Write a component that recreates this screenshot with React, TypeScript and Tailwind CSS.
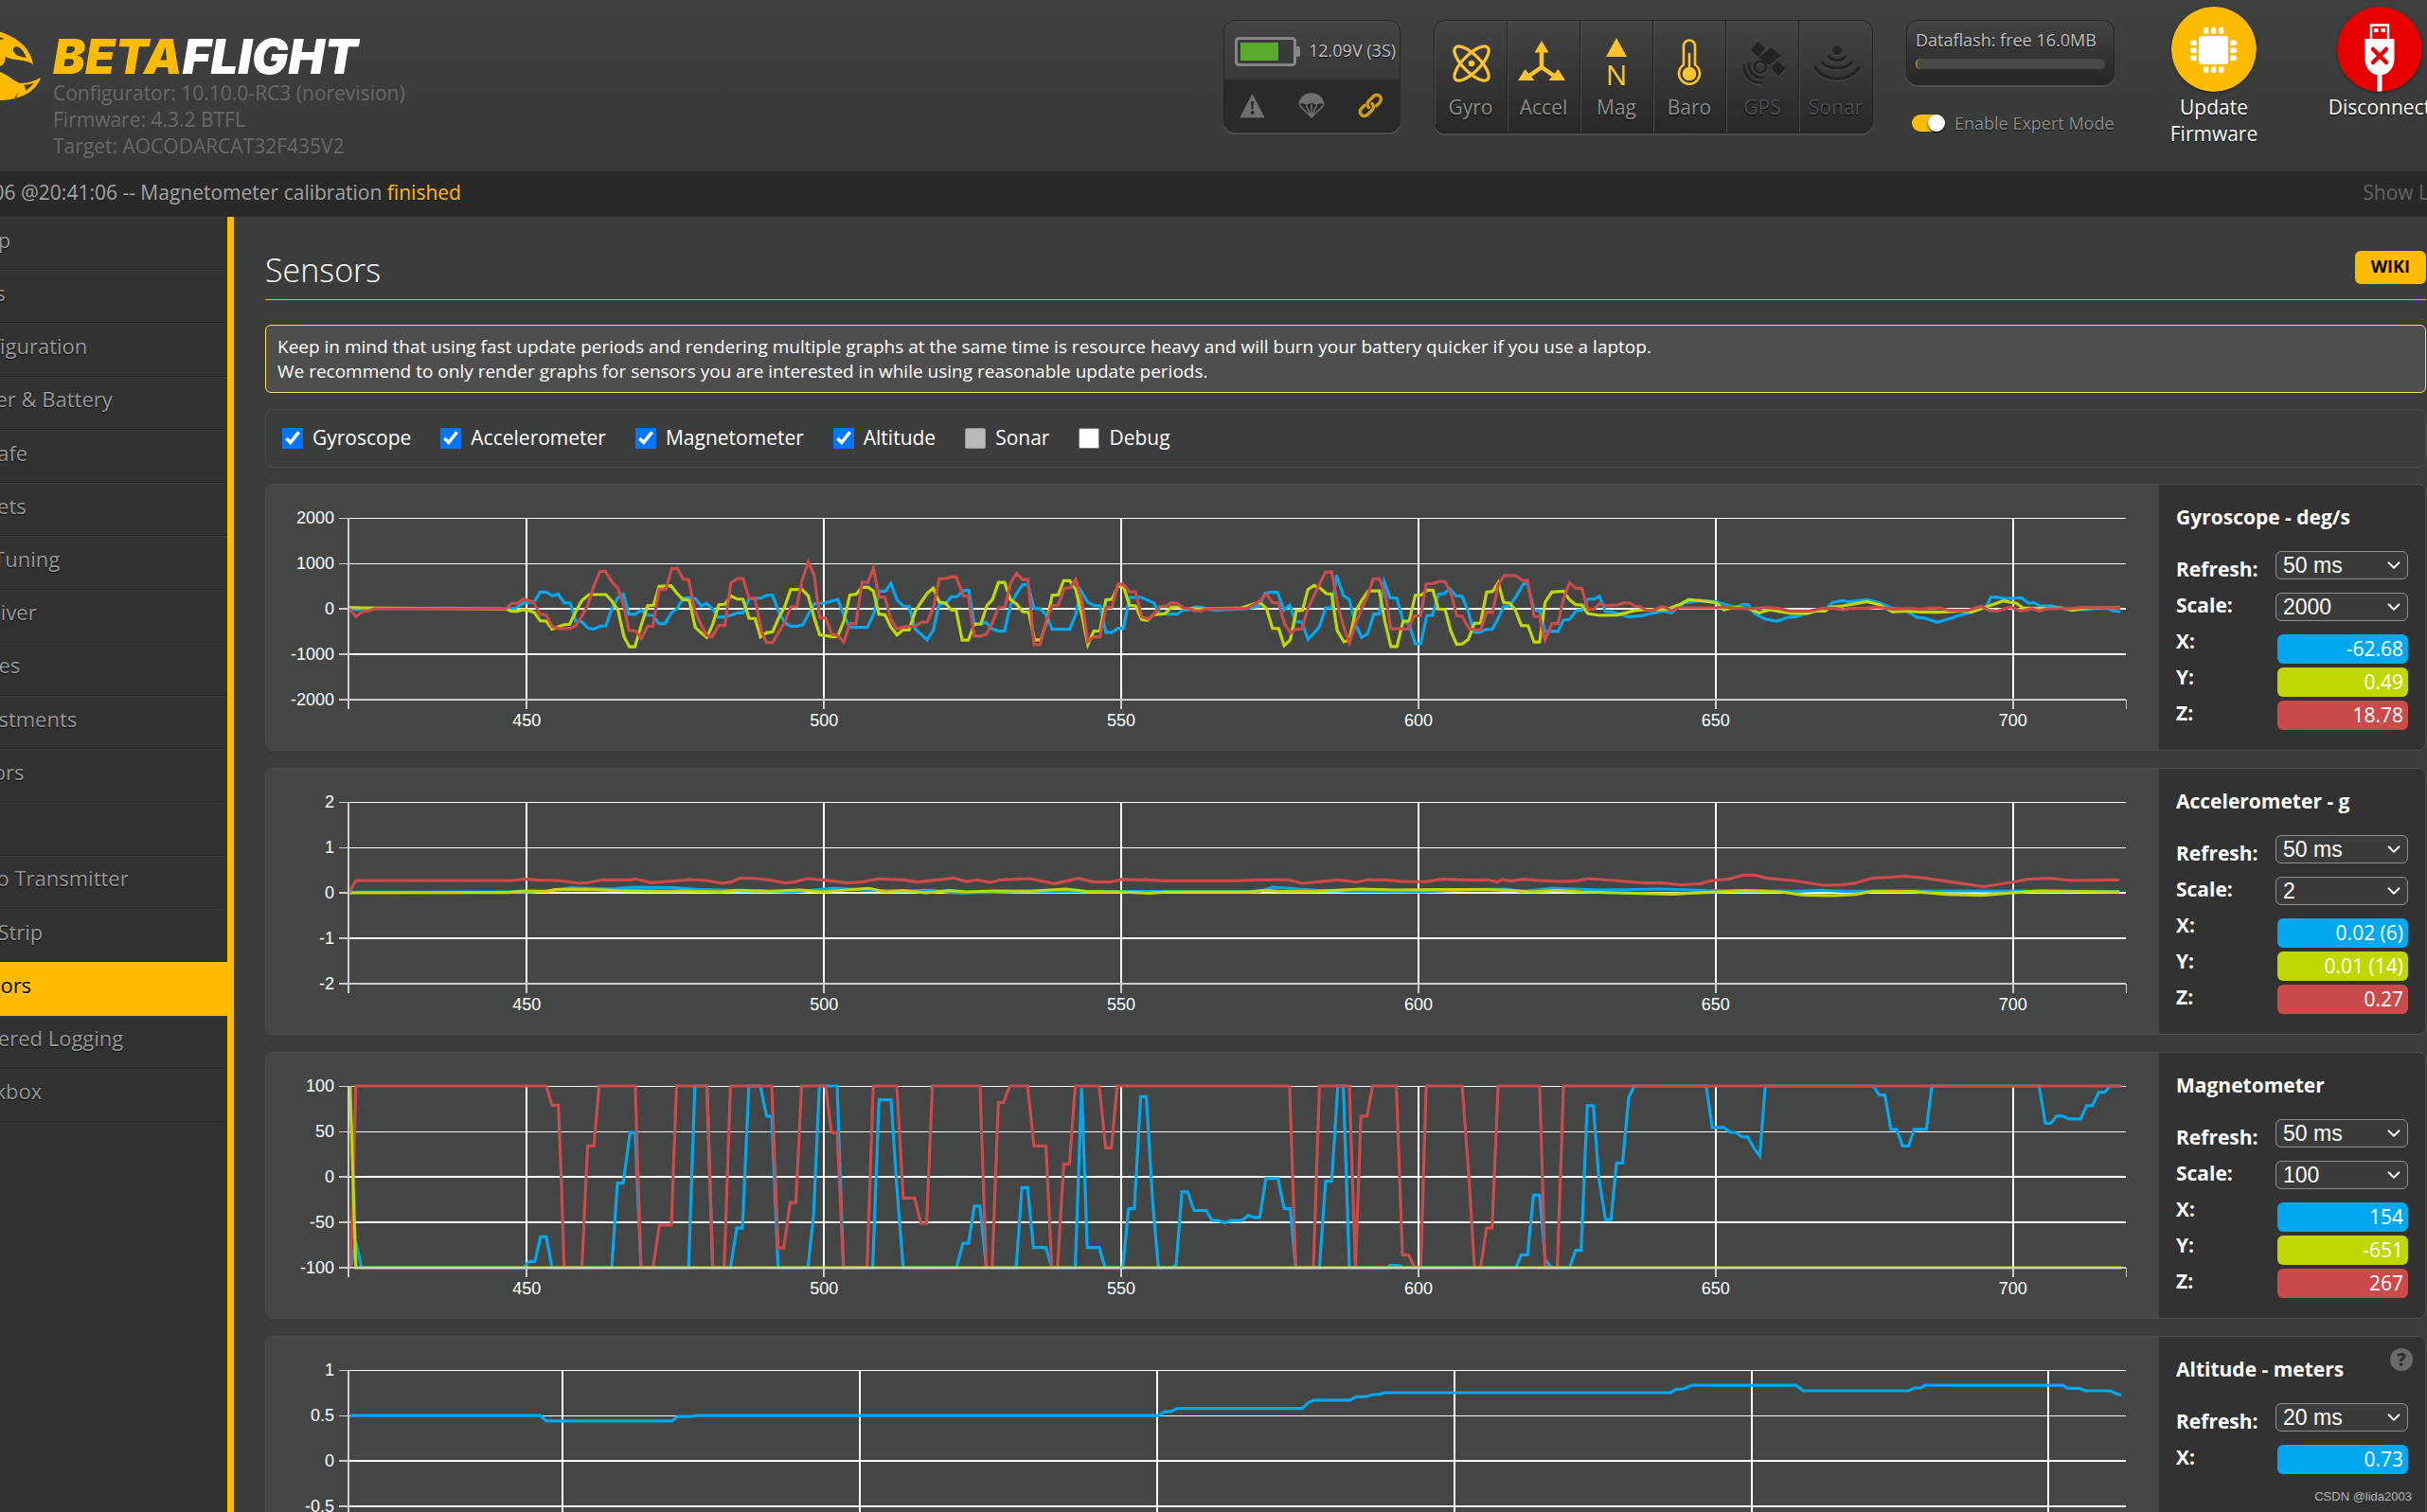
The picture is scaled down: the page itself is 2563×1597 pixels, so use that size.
import { useId, useLayoutEffect, useRef, useState } from "react";
import type { ReactNode } from "react";
import { ChevronDown } from "lucide-react";

const BLUE = "#00a8f0";
const GREEN = "#c0d800";
const RED = "#cb4b4b";

/* ---------- recorded data ---------- */

type Cal = { t: number; x: number; perUnit: number; zero: number; perValue: number };
type Point = [number, number];

const GYRO_A: Cal = { t: 450, x: 449, perUnit: 9.844, zero: 941, perValue: 0.1444 };
const GYRO_B: Cal = { t: 600, x: 369.3, perUnit: 9.747, zero: 431, perValue: 0.1444 };
const ACC: Cal = { t: 450, x: 162, perUnit: 5.181, zero: 129, perValue: 144 };
const MAG_A: Cal = { t: 450, x: 374, perUnit: 10.362, zero: 368, perValue: 2.89 };
const MAG_B: Cal = { t: 600, x: 369.3, perUnit: 9.747, zero: 368, perValue: 2.89 };
const ALT: Cal = { t: 450, x: 248.5, perUnit: 4.971, zero: 425.5, perValue: 290 };

function decode(cal: Cal, raw: string): Point[] {
  const n = raw.trim().split(/\s+/).map(Number);
  const out: Point[] = [];
  for (let i = 0; i + 1 < n.length; i += 2) {
    out.push([cal.t + (n[i] - cal.x) / cal.perUnit, (cal.zero - n[i + 1]) / cal.perValue]);
  }
  return out;
}

const gyroX = [
  ...decode(GYRO_A, `155 938 166 944 177 941 320 939 414 941 430 940 443 922 461 920 471 888 481 888 491 900 501 895 511 922 521 923 530 980 540 982 550 1002 560 1006 570 996 580 995 590 940 600 905 609 895 618 958 628 959 638 945 648 961 658 962 668 988 678 988 688 955 698 940 708 907 718 906 728 908 738 932 747 924 757 942 766 968 776 966 787 962 797 954 807 954 817 909 837 907 847 898 856 898 866 950 876 985 886 996 896 996 906 992 915 960 925 925 943 923 954 916 964 911 974 960 984 1000 1013 1000 1023 960 1033 885 1043 885 1052 860 1062 912 1072 932 1082 933 1092 1005 1102 1022 1112 1040 1122 1010 1132 925 1142 926 1152 903 1162 902 1172 883 1181 883 1190 990 1210 985 1220 1005 1230 1012 1240 1012 1250 930 1260 893 1270 865 1279 865 1289 940 1299 941 1309 960 1319 1006 1348 1006 1358 960 1366 882 1378 920 1388 930 1398 932 1408 1016 1418 1016 1428 1003 1437 1003 1447 905 1467 905 1487 922 1497 957 1516 958 1526 958 1536 945 1546 944 1556 935 1566 936`),
  ...decode(GYRO_B, `20 430 35 436 90 430 108 422 118 381 128 379 138 379 149 435 158 420 168 472 178 473 188 528 198 508 207 488 217 428 227 428 235 325 246 388 256 402 266 480 276 522 286 510 296 448 305 448 313 345 323 396 334 397 344 470 354 480 364 542 373 542 383 452 392 452 402 385 411 383 421 368 431 390 441 391 451 440 460 505 470 506 480 497 490 496 500 462 509 424 519 422 530 390 541 352 548 351 559 436 568 437 577 503 598 503 607 467 617 465 628 437 637 436 647 401 657 400 666 392 676 440 686 440 714 457 735 453 745 448 758 444 770 438 784 444 805 412 830 405 855 408 875 418 890 426 900 418 910 418 920 445 938 464 958 470 975 458 990 456 1010 440 1035 436 1048 411 1065 405 1075 409 1095 404 1105 402 1125 412 1145 428 1168 435 1186 458 1200 461 1220 474 1245 460 1255 452 1275 443 1300 425 1308 394 1318 394 1330 399 1358 396 1370 414 1378 411 1388 422 1408 422 1430 432 1465 434 1478 430 1500 430 1508 438 1520 440`),
];
const gyroY = [
  ...decode(GYRO_A, `155 937 175 938 414 942 424 949 434 949 443 944 455 948 462 954 471 979 481 980 491 1006 501 998 510 992 520 990 530 950 540 915 552 896 580 896 590 917 600 945 610 1030 619 1062 628 1062 639 990 649 931 659 930 668 870 688 868 698 893 708 912 718 914 728 1000 738 1018 747 1032 757 990 767 928 777 927 787 900 797 910 807 911 817 971 827 972 836 1030 846 1017 856 1014 866 970 876 935 886 880 905 880 915 900 925 970 934 1024 946 1027 958 1030 964 1028 974 980 984 897 994 895 1004 873 1014 872 1023 885 1032 958 1042 960 1052 1000 1062 1024 1072 1008 1082 1008 1092 950 1102 920 1112 892 1122 876 1132 920 1142 922 1152 945 1160 946 1170 1041 1180 1041 1190 990 1201 989 1211 930 1220 912 1230 857 1240 857 1250 912 1260 926 1270 950 1280 952 1290 1040 1300 1040 1310 980 1319 898 1329 897 1338 852 1348 852 1358 880 1368 960 1378 1055 1388 1012 1398 1011 1408 912 1418 911 1428 870 1437 870 1447 930 1457 932 1467 975 1476 978 1487 960 1506 957 1516 936 1528 935 1540 940 1566 942`),
  ...decode(GYRO_B, `20 431 80 428 108 409 120 430 130 493 140 494 149 548 159 530 169 437 179 436 188 370 198 357 208 365 218 383 227 384 236 500 247 536 256 530 266 440 276 405 287 374 305 374 314 470 324 551 334 551 344 470 354 470 364 388 374 387 384 372 393 372 402 432 413 433 422 500 432 544 441 543 451 528 461 477 471 476 481 378 491 376 500 348 509 411 519 413 528 435 538 484 549 485 559 537 568 537 577 410 588 378 607 375 617 402 627 418 637 419 647 446 666 452 695 451 725 436 745 434 775 434 800 415 812 402 835 406 858 412 870 434 890 426 910 430 928 444 945 434 980 446 1008 446 1020 438 1036 438 1045 426 1065 422 1085 415 1105 408 1125 418 1147 441 1165 438 1195 441 1220 442 1245 440 1258 436 1275 442 1300 425 1328 406 1350 414 1360 428 1400 430 1425 428 1440 436 1470 428 1520 428`),
];
const gyroZ = [
  ...decode(GYRO_A, `155 941 166 966 177 950 187 948 197 941 414 941 424 924 434 923 443 910 452 915 460 920 471 958 481 960 491 997 501 1004 520 1004 530 995 540 965 550 930 560 870 570 822 579 822 590 855 600 875 610 935 618 1010 629 1012 639 1035 649 996 658 996 668 880 679 880 689 814 698 812 708 847 717 848 727 945 737 990 747 1026 756 1030 767 994 777 994 787 858 798 845 807 845 817 907 827 908 837 1010 846 1048 856 1048 866 1015 876 985 886 935 896 935 905 850 915 792 925 835 934 970 944 971 954 1022 964 1026 974 1047 984 988 994 988 1004 857 1014 857 1023 812 1032 903 1042 904 1052 975 1062 1005 1073 998 1092 996 1102 984 1112 983 1122 940 1132 846 1142 845 1152 840 1160 840 1172 900 1180 901 1190 1028 1200 1028 1210 1022 1220 985 1230 937 1241 936 1250 860 1260 828 1270 848 1279 848 1289 1055 1299 1055 1309 980 1319 931 1329 930 1339 876 1349 874 1358 847 1368 915 1378 1045 1388 1030 1398 1030 1408 937 1418 936 1428 862 1437 864 1447 887 1457 887 1467 965 1477 973 1487 960 1497 934 1509 932 1516 922 1526 923 1536 938 1546 940 1556 948 1566 948`),
  ...decode(GYRO_B, `20 432 88 430 110 405 120 383 130 411 140 412 150 480 160 508 168 496 178 495 188 430 205 360 217 314 227 314 237 420 247 490 256 540 266 480 276 430 286 390 295 336 305 336 315 385 324 494 352 495 363 453 373 453 382 352 393 351 403 345 413 345 423 385 432 453 441 455 452 493 462 498 471 498 481 442 491 442 500 355 510 325 529 325 539 340 548 341 559 455 568 456 577 530 588 478 598 478 607 400 617 348 627 365 637 366 647 432 656 433 667 414 675 421 696 419 706 412 716 413 724 423 732 424 743 436 753 436 768 424 774 426 784 438 795 428 860 428 870 425 890 430 920 430 940 427 960 430 978 438 1010 438 1030 430 1055 430 1065 434 1080 430 1102 430 1120 426 1150 432 1180 430 1190 433 1210 428 1225 429 1240 436 1270 436 1292 423 1305 436 1318 438 1340 426 1358 438 1375 431 1387 438 1400 431 1440 430 1460 426 1520 429`),
];

const accX = decode(ACC, `7 127 145 126 165 126 185 121 200 113 235 117 255 111 290 113 310 118 330 120 350 123 395 126 430 114 460 121 490 123 515 121 540 130 600 124 650 125 680 125 800 125 812 111 850 121 880 124 940 126 985 119 1015 117 1030 125 1055 115 1075 117 1100 120 1150 117 1190 122 1270 124 1290 121 1310 124 1380 123 1420 123 1550 125`);
const accY = decode(ACC, `7 129 145 128 160 123 178 125 186 119 215 118 240 122 280 124 300 123 330 126 345 121 375 124 400 120 420 126 440 120 460 115 475 126 490 122 510 129 530 122 545 126 570 123 600 124 632 117 650 125 680 126 705 130 720 126 790 126 806 121 820 125 850 124 890 117 920 120 960 119 1000 119 1020 122 1040 126 1060 121 1080 126 1110 129 1160 133 1190 128 1225 122 1255 126 1275 136 1300 138 1320 134 1335 124 1370 125 1400 134 1430 137 1460 128 1480 123 1550 126`);
const accZ = decode(ACC, `7 129 13 90 150 90 160 85 172 89 190 90 208 99 215 97 228 88 250 88 257 85 270 97 285 93 305 87 318 90 332 99 340 95 348 82 362 84 375 89 387 98 395 95 406 84 420 88 442 98 455 94 468 85 490 88 503 95 520 88 534 82 545 93 555 88 566 96 575 88 600 84 622 100 643 83 655 94 670 95 680 87 700 88 720 91 780 91 800 88 825 87 838 99 850 95 868 88 885 95 895 88 910 88 925 93 945 94 960 86 990 89 1000 88 1008 95 1012 87 1020 92 1030 86 1045 90 1060 93 1075 92 1087 84 1110 90 1135 98 1150 97 1168 104 1185 100 1195 90 1210 85 1222 73 1232 73 1242 82 1265 90 1292 105 1308 104 1320 98 1335 82 1350 80 1362 76 1380 82 1410 98 1432 110 1445 102 1460 93 1470 86 1490 83 1508 90 1550 88`);

const magX = [
  ...decode(MAG_A, `67 657 76 575 86 657 368 657 378 637 388 637 398 559 408 559 418 657 522 657 532 388 542 388 554 227 563 227 573 657 656 657 667 79 688 79 698 657 729 657 740 531 750 531 761 79 781 79 792 175 801 175 812 657 864 657 874 490 884 79 915 79 926 657 977 657 988 123 1009 123 1019 400 1030 657 1123 657 1134 579 1144 579 1154 461 1164 461 1175 657 1227 657 1237 402 1247 402 1257 593 1279 593 1289 657 1330 657 1341 85 1351 593 1372 593 1382 657 1413 657 1423 469 1433 469 1444 113 1454 113 1465 450 1475 657 1498 657 1506 648 1516 416 1526 416 1537 475 1558 475`),
  ...decode(MAG_B, `31 507 42 507 52 515 61 507 80 507 90 490 100 497 109 497 119 373 139 373 149 469 159 469 168 657 207 657 217 382 227 382 237 79 246 79 256 657 320 657 322 650 336 650 345 657 529 657 538 616 548 616 558 426 568 426 577 630 587 657 617 657 627 602 636 602 646 142 656 142 665 370 676 504 685 504 694 324 704 324 714 115 723 79 841 79 851 211 870 211 880 226 890 227 900 241 909 241 919 275 929 302 938 79 1115 79 1125 108 1134 108 1144 217 1153 217 1163 270 1173 270 1182 217 1202 217 1211 79 1387 79 1397 198 1406 198 1416 174 1426 175 1436 184 1455 184 1465 142 1474 142 1485 99 1494 99 1504 79 1522 79`),
];
const magY = [...decode(MAG_A, `66 79 76 657 1560 657`), ...decode(MAG_B, `1522 657`)];
const magZ = [
  ...decode(MAG_A, `67 657 76 79 408 79 418 140 429 140 434 368 439 657 470 657 480 270 491 270 500 79 563 79 573 657 594 657 605 521 626 521 635 79 688 79 698 657 718 657 729 79 801 79 812 594 822 594 833 450 843 450 853 79 895 79 905 227 915 227 926 657 967 657 978 79 1019 79 1030 435 1050 435 1061 516 1071 516 1081 79 1164 79 1175 657 1185 657 1196 131 1205 131 1216 79 1247 79 1258 270 1279 270 1289 657 1299 657 1310 327 1320 327 1330 79 1372 79 1383 276 1393 276 1403 79 1560 79`),
  ...decode(MAG_B, `31 79 158 79 168 657 197 657 207 79 256 79 266 657 275 175 285 175 294 79 333 79 343 616 353 616 363 657 373 657 382 79 441 79 452 368 461 657 471 657 481 530 490 530 500 79 568 79 577 657 597 657 607 79 1522 79`),
];

const altX = decode(ALT, `71 281 230 281 235 298 340 298 345 284 356 284 361 281 747 281 752 269 757 268 763 258 867 258 872 240 877 232 907 232 912 221 921 220 926 214 932 213 936 208 1175 208 1180 197 1186 196 1193 184 1280 184 1286 202 1374 202 1379 193 1384 193 1388 184 1503 184 1507 194 1517 194 1522 202 1543 202 1549 213 1552 215`);

/* ---------- chart ---------- */

type Series = { color: string; points: Point[] };
type ChartProps = { title: string; start: number; end: number; ticks: number[]; series: Series[] };

function Chart({ title, start, end, ticks, series }: ChartProps) {
  const box = useRef<HTMLDivElement>(null);
  const [width, setWidth] = useState(0);

  useLayoutEffect(() => {
    const node = box.current;
    if (!node) return;
    const measure = () => setWidth(node.clientWidth);
    measure();
    const observer = new ResizeObserver(measure);
    observer.observe(node);
    return () => observer.disconnect();
  }, []);

  const left = 87;
  const right = width - 35;
  const top = 35;
  const height = 192;
  const bottom = top + height;
  const max = ticks[0];
  const min = ticks[ticks.length - 1];
  const px = (t: number) => left + ((t - start) / (end - start)) * (right - left);
  const py = (v: number) => top + ((max - v) / (max - min)) * height;
  const xTicks: number[] = [];
  for (let t = Math.ceil(start / 50) * 50; t < end; t += 50) xTicks.push(t);

  return (
    <div ref={box} className="min-w-0 flex-1 rounded-l-lg bg-[#444645]">
      {width > 0 && (
        <svg width={width} height={280} role="img" aria-label={title} className="block">
          <g stroke="#fff">
            {ticks.map((v, i) => (
              <line key={v} x1={left} x2={right} y1={py(v)} y2={py(v)} strokeWidth={i < 2 ? 1 : 2} shapeRendering="crispEdges" />
            ))}
            {xTicks.map((t) => (
              <line key={t} x1={px(t)} x2={px(t)} y1={top} y2={bottom} strokeWidth={2} shapeRendering="crispEdges" />
            ))}
          </g>
          <g fill="none" strokeWidth={3.2} strokeLinejoin="miter">
            {series.map((s, i) => (
              <polyline key={i} stroke={s.color} points={s.points.map(([t, v]) => `${px(t).toFixed(1)},${py(v).toFixed(1)}`).join(" ")} />
            ))}
          </g>
          <g stroke="#ccc" strokeWidth={2} shapeRendering="crispEdges">
            <line x1={left} x2={left} y1={top} y2={bottom + 10} />
            <line x1={left} x2={right} y1={bottom} y2={bottom} />
            <line x1={right} x2={right} y1={bottom} y2={bottom + 10} strokeWidth={1} />
            {ticks.map((v, i) => (
              <line key={v} x1={left - 10} x2={left} y1={py(v)} y2={py(v)} strokeWidth={i < 2 ? 1 : 2} />
            ))}
            {xTicks.map((t) => (
              <line key={t} x1={px(t)} x2={px(t)} y1={bottom} y2={bottom + 10} />
            ))}
          </g>
          <g fill="#fff" fontFamily="'Liberation Sans', Arial, sans-serif" fontSize={18}>
            {ticks.map((v) => (
              <text key={v} x={left - 15} y={py(v) + 6} textAnchor="end">{v}</text>
            ))}
            {xTicks.map((t) => (
              <text key={t} x={px(t)} y={bottom + 28} textAnchor="middle">{t}</text>
            ))}
          </g>
        </svg>
      )}
    </div>
  );
}

/* ---------- sensor panel ---------- */

type PanelProps = ChartProps & {
  refresh: string;
  scale?: string;
  values: { name: string; text: string }[];
  help?: boolean;
};

function PanelSelect({ id, value }: { id: string; value: string }) {
  return (
    <div className="relative mb-[14px] h-[30px] w-[140px]">
      <select
        id={id}
        defaultValue={value}
        className="block h-full w-full appearance-none rounded-md border border-[#8f8f8f] bg-[#3b3b3b] pl-[7px] font-['Liberation_Sans',Arial,sans-serif] text-[23px] leading-7 text-white"
      >
        <option>{value}</option>
      </select>
      <ChevronDown aria-hidden className="pointer-events-none absolute top-1 right-1 size-[22px] text-white" strokeWidth={2} />
    </div>
  );
}

const VALUE_BG = ["bg-[#00a8f0]", "bg-[#c0d800]", "bg-[#cb4b4b]"];

function SensorPanel({ refresh, scale, values, help, ...chart }: PanelProps) {
  const id = useId();
  return (
    <section className="flex h-[282px] shrink-0 rounded-lg border border-[#4d4f4e]">
      <Chart {...chart} />
      <div className="relative w-[281px] shrink-0 rounded-r-lg bg-[#323232] px-[18px] pt-5">
        <h2 className="text-[21px] leading-7 font-bold text-white">{chart.title}</h2>
        {help && (
          <button type="button" aria-label="Help" className="absolute top-3 right-[13px] size-6 rounded-full bg-[#6b6b6b] text-[20px] leading-6 font-extrabold text-[#323232]">
            ?
          </button>
        )}
        <div className="mt-[22px] flex justify-between">
          <div className="flex flex-col text-[21px] leading-[38px] font-bold text-white">
            <label htmlFor={`${id}r`}>Refresh:</label>
            {scale && <label htmlFor={`${id}s`}>Scale:</label>}
            {values.map((v) => (
              <label key={v.name} htmlFor={`${id}${v.name}`}>{v.name}:</label>
            ))}
          </div>
          <div className="flex flex-col items-end">
            <PanelSelect id={`${id}r`} value={refresh} />
            {scale && <PanelSelect id={`${id}s`} value={scale} />}
            {values.map((v, i) => (
              <output
                key={v.name}
                id={`${id}${v.name}`}
                className={`mb-1 block h-[31px] w-[138px] rounded-md pr-[5px] text-right text-[21px] leading-[31px] text-white ${VALUE_BG[i]}`}
              >
                {v.text}
              </output>
            ))}
          </div>
        </div>
      </div>
    </section>
  );
}

/* ---------- header ---------- */

function BeeLogo() {
  return (
    <svg width="144" height="80" viewBox="-100 30 144 80" aria-hidden className="mt-[30px] shrink-0">
      <g fill="#ffbb00">
        <path d="M-60 60 C-50 40 -25 28 0 33.500 C14 38 32 48 35 68 C30 64.500 24 64 17 63 C12 62.500 8 61 5.500 60 C6 66 3 69 0 70 L-50 74 Z" />
        <path d="M-50 70 L0 76 C8 79 14 85 21 88 C30 88 37 85 43 82 C39 94 26 105 0 106 C-25 106 -45 90 -50 70 Z" />
      </g>
      <g fill="#3a3c3b">
        <path d="M14 52 C14 48.500 19 48.500 22 51.500 C25 54.500 26.500 58 28 61 C21 60 14 58 14 52 Z" />
        <path d="M25 90 C29 89.500 33 88.500 36 87.500 C33 91 30 94 27 96 C27.500 94 26.500 92 25 90 Z" />
        <path d="M19.500 96 L17.500 103 L15 103.500 C17 101 18.500 99 19.500 96 Z" />
        <path d="M0 39.500 C2 39.500 4 40.500 5 41.500 C3 41 1.500 41.500 0 42 Z" />
      </g>
    </svg>
  );
}

function SensorCell({ label, on, children }: { label: string; on?: boolean; children: ReactNode }) {
  return (
    <div className="flex w-[77px] grow flex-col items-center border-r border-[#222] pt-[13px] shadow-[inset_1px_0_0_#4a4a4a] last:border-r-0">
      <svg width="60" height="60" viewBox="0 0 60 60" fill="none" aria-hidden className={on ? "overflow-visible text-[#ffc42b]" : "overflow-visible text-[#232323] drop-shadow-[0_1px_0_#4d4d4d]"}>
        {children}
      </svg>
      <span className={`mt-1 text-[21px] leading-7 [text-shadow:0_1px_1px_#000] ${on ? "text-[#8f8f8f]" : "text-[#4f4f4f]"}`}>{label}</span>
    </div>
  );
}

function Header() {
  return (
    <header className="flex h-[181px] shrink-0 items-start bg-linear-to-b from-[#3f4140] to-[#373938]">
      <BeeLogo />
      <div className="mt-9 ml-3 shrink-0 text-[21px] leading-7 text-[#686868]">
        <div className="font-['Inter',sans-serif] text-[51px] leading-[48px] font-black text-white italic">
          <span className="text-[#ffbb00]">BETA</span>FLIGHT
        </div>
        <div>Configurator: 10.10.0-RC3 (norevision)</div>
        <div>Firmware: 4.3.2 BTFL</div>
        <div>Target: AOCODARCAT32F435V2</div>
      </div>

      <div className="mt-[21px] ml-auto w-[187px] shrink-0 overflow-hidden rounded-xl border border-[#272727] bg-linear-to-b from-[#444] to-[#2f2f2f] shadow-[0_2px_0_#4f4f4f]">
        <div className="flex h-[62px] items-center pl-[11px] text-[18px] whitespace-nowrap text-[#c2c2c2] [text-shadow:0_1px_1px_#000]">
          <svg width="70" height="32" viewBox="0 0 70 32" aria-hidden className="mt-1 shrink-0">
            <rect x="1.500" y="1.500" width="62" height="28" rx="3" fill="#3a3a3a" stroke="#868686" strokeWidth="3" />
            <path d="M65 10 h2 a2 2 0 0 1 2 2 v7 a2 2 0 0 1 -2 2 h-2 z" fill="#868686" />
            <rect x="6" y="6" width="40" height="19" fill="#5ba92c" />
          </svg>
          <span className="ml-2 leading-6">12.09V (3S)</span>
        </div>
        <div className="flex h-[55px] items-center justify-between bg-[#2a2a2a] pr-[17px] pl-4">
          <svg width="27" height="26" viewBox="0 0 27 26" aria-hidden>
            <path d="M13.500 1.500 L25.500 24.500 H1.500 Z" fill="#6f6f6f" stroke="#6f6f6f" strokeWidth="1.500" strokeLinejoin="round" />
            <path d="M12 8 h3 l-.6 8.500 h-1.800 z" fill="#2a2a2a" />
            <circle cx="13.500" cy="20" r="2" fill="#2a2a2a" />
          </svg>
          <svg width="28" height="27" viewBox="0 0 28 27" aria-hidden>
            <path d="M0.500 13 C0.500 -4 27.500 -4 27.500 13 C25.500 10.500 21.500 10.500 19.500 13 C17 10.500 11 10.500 8.500 13 C6.500 10.500 2.500 10.500 0.500 13 Z" fill="#6f6f6f" />
            <path d="M1 13 L14 26 L27 13 M8.500 13 L14 26 L19.500 13 M14 12 V26" fill="none" stroke="#6f6f6f" strokeWidth="1.500" />
          </svg>
          <svg width="27" height="27" viewBox="0 0 27 27" fill="none" stroke="#d29b10" strokeWidth="3.500" strokeLinecap="round" aria-hidden>
            <path d="M11.500 15.500 C9.500 13.500 9.500 10.800 11.500 8.800 L16.500 3.800 C18.500 1.800 21.200 1.800 23 3.600 C24.900 5.500 24.900 8.200 23 10.200 L19.500 13.700" />
            <path d="M15 11.500 C17 13.500 17 16.200 15 18.200 L10.200 23 C8.200 25 5.500 25 3.700 23.200 C1.800 21.300 1.800 18.600 3.700 16.700 L7 13.300" />
          </svg>
        </div>
      </div>

      <div className="mt-[21px] ml-[35px] flex h-[120px] w-[464px] shrink-0 overflow-hidden rounded-xl border border-[#272727] bg-linear-to-b from-[#444] to-[#282828] shadow-[0_2px_0_#4f4f4f]">
        <SensorCell label="Gyro" on>
          <g stroke="currentColor" strokeWidth="3.200">
            <ellipse cx="31" cy="32" rx="24" ry="9" transform="rotate(45 31 32)" />
            <ellipse cx="31" cy="32" rx="24" ry="9" transform="rotate(-45 31 32)" />
          </g>
          <circle cx="31" cy="32" r="3.300" fill="currentColor" />
        </SensorCell>
        <SensorCell label="Accel" on>
          <path d="M28 36 V18 M28 36 L12 47 M28 36 L44 47" stroke="currentColor" strokeWidth="4.500" />
          <path d="M28 8 L35.500 20.500 H20.500 Z M3 50 L10.500 38 L20.500 50 Z M53 50 L45.500 38 L35.500 50 Z" fill="currentColor" />
        </SensorCell>
        <SensorCell label="Mag" on>
          <path d="M30 5 L41 25 H19 Z" fill="currentColor" />
          <text x="30" y="55" textAnchor="middle" fill="currentColor" fontFamily="'Open Sans', sans-serif" fontSize="30">N</text>
        </SensorCell>
        <SensorCell label="Baro" on>
          <path d="M24 33.500 V13.500 a6 6 0 0 1 12 0 V33.500 a11 11 0 1 1 -12 0 Z" stroke="currentColor" strokeWidth="2.600" />
          <circle cx="30" cy="43" r="7.300" fill="currentColor" />
          <path d="M30 22 V40" stroke="currentColor" strokeWidth="2.600" strokeLinecap="round" />
        </SensorCell>
        <SensorCell label="GPS">
          <path d="M25.400 9 L33 16 L26 25.700 L17.400 17.700 Z M39.600 15 L50 24.300 L37 34 L26.400 26 Z M45.700 29.700 L54.700 37 L47 46 L39 37 Z" fill="currentColor" />
          <circle cx="28" cy="36" r="6" stroke="currentColor" strokeWidth="2.500" />
          <path d="M16 31.500 C15 41 21 47.500 31 47.500 M11 33 C10 45 18 53 30 52.500" stroke="currentColor" strokeWidth="3" />
        </SensorCell>
        <SensorCell label="Sonar">
          <circle cx="31" cy="18.300" r="4.800" fill="currentColor" />
          <g stroke="currentColor" strokeWidth="3.400" strokeLinecap="round">
            <path d="M22.500 25 C27 30 35 30 39.500 25" />
            <path d="M15 31 C23 39 39 39 47 31" />
            <path d="M8 37 C19 52 43 52 54 37" />
          </g>
        </SensorCell>
      </div>

      <div className="mt-[21px] ml-[35px] w-[220px] shrink-0 text-[18px] whitespace-nowrap">
        <div className="h-[69px] rounded-xl border border-[#272727] bg-linear-to-b from-[#444] to-[#262626] px-[9px] pt-2 shadow-[0_2px_0_#4f4f4f]">
          <div className="leading-6 text-[#c2c2c2] [text-shadow:0_1px_1px_#000]">Dataflash: free 16.0MB</div>
          <div className="mt-2 h-[11px] rounded-md border-l border-[#ffbb00] bg-[#4a4a4a]" />
        </div>
        <label className="mt-7 ml-1.5 flex items-center gap-[10px] leading-6 text-[#8f8f8f] [text-shadow:0_1px_1px_#000]">
          <input
            type="checkbox"
            role="switch"
            defaultChecked
            className="flex h-[18px] w-[35px] shrink-0 appearance-none justify-end rounded-full bg-[#ffbb00] before:size-[18px] before:rounded-full before:bg-white before:shadow-[0_1px_2px_#000]"
          />
          Enable Expert Mode
        </label>
      </div>

      <button type="button" className="mt-[7px] ml-[45px] flex w-[120px] shrink-0 flex-col items-center text-[21px] leading-7 text-white [text-shadow:0_1px_1px_#000]">
        <svg width="90" height="90" viewBox="0 0 90 90" aria-hidden className="rounded-full shadow-[0_1px_3px_#222]">
          <circle cx="45" cy="45" r="45" fill="#ffbb00" />
          <g fill="#fff">
            <rect x="29" y="31" width="31" height="30" rx="3" />
            {[34, 42, 50].map((x) => (
              <g key={x}>
                <path d={`M${x} 28.500 v-4 a2.700 2.700 0 0 1 5.400 0 v4 z`} />
                <path d={`M${x} 63.500 v4 a2.700 2.700 0 0 0 5.400 0 v-4 z`} />
              </g>
            ))}
            {[35.5, 43.5, 51.5].map((y) => (
              <g key={y}>
                <path d={`M26.500 ${y} h-4 a2.700 2.700 0 0 0 0 5.400 h4 z`} />
                <path d={`M62.500 ${y} h4 a2.700 2.700 0 0 1 0 5.400 h-4 z`} />
              </g>
            ))}
          </g>
        </svg>
        <span className="mt-0.5">Update</span>
        <span>Firmware</span>
      </button>

      <button type="button" className="mt-[7px] -mr-[10px] ml-[55px] flex w-[120px] shrink-0 flex-col items-center text-[21px] leading-7 text-white [text-shadow:0_1px_1px_#000]">
        <svg width="90" height="90" viewBox="0 0 90 90" aria-hidden className="rounded-full shadow-[0_1px_3px_#222]">
          <circle cx="45" cy="45" r="45" fill="#e60000" />
          <path d="M36 35 V19.500 H54 V35" fill="none" stroke="#fff" strokeWidth="2.500" />
          <path d="M39 23 h4.500 v4 h-4.500 z M46.500 23 h4.500 v4 h-4.500 z" fill="#fff" />
          <path d="M29.500 34 h31 v21 c0 9 -6 16.500 -13 17 v17.500 h-5 v-17.500 c-7 -.5 -13 -8 -13 -17 z" fill="#fff" />
          <path d="M38 45 L52 59 M52 45 L38 59" stroke="#e60000" strokeWidth="4.500" strokeLinecap="round" />
        </svg>
        <span className="mt-0.5">Disconnect</span>
      </button>
    </header>
  );
}

/* ---------- page ---------- */

const TABS = [
  "Setup", "Ports", "Configuration", "Power & Battery", "Failsafe", "Presets", "PID Tuning", "Receiver", "Modes",
  "Adjustments", "Motors", "OSD", "Video Transmitter", "LED Strip", "Sensors", "Tethered Logging", "Blackbox",
];

const TOGGLES = [
  { name: "Gyroscope", checked: true },
  { name: "Accelerometer", checked: true },
  { name: "Magnetometer", checked: true },
  { name: "Altitude", checked: true },
  { name: "Sonar", checked: false, disabled: true },
  { name: "Debug", checked: false },
];

export default function App() {
  return (
    <div className="relative h-screen overflow-hidden bg-[#3b3d3c] font-['Open_Sans','Noto_Sans',sans-serif]">
      <div className="-ml-[100px] flex h-full flex-col">
        <Header />

        <div className="flex h-12 shrink-0 items-center justify-between overflow-hidden bg-[#292929] pl-[7px] text-[21px] whitespace-nowrap">
          <p className="pb-0.5 text-[#a3a3a3]">
            2024-04-06 @20:41:06 -- Magnetometer calibration <span className="text-[#ffbb00]">finished</span>
          </p>
          <button type="button" className="-mr-[26px] pb-0.5 text-[#636363]">Show Log</button>
        </div>

        <div className="flex min-h-0 flex-1">
          <nav className="w-[347px] shrink-0 border-r-[7px] border-[#ffbb00] bg-[#323232]">
            <ul className="grid h-[956px] auto-rows-fr">
              {TABS.map((tab) => (
                <li key={tab} className="min-h-0">
                  <a
                    href="#"
                    aria-current={tab === "Sensors" ? "page" : undefined}
                    className={
                      tab === "Sensors"
                        ? "flex h-full items-center bg-[#ffbb00] pb-2 pl-13 text-[22px] text-black [text-shadow:0_1px_0_#ffe08a]"
                        : "flex h-full items-center border-t border-b border-t-[#3b3b3b] border-b-[#252525] pb-2 pl-13 text-[22px] text-[#999] [text-shadow:0_1px_1px_#000]"
                    }
                  >
                    {tab}
                  </a>
                </li>
              ))}
            </ul>
          </nav>

          <main className="min-w-0 flex-1 overflow-hidden pr-px pl-[33px]">
            <div className="flex items-start justify-between border-b border-[#ffbb00] pt-[34px] pb-[9px]">
              <h1 className="text-[34px] leading-[44px] font-light text-white">Sensors</h1>
              <a href="#" className="mt-0.5 h-[35px] rounded-md bg-[#ffbb00] px-[17px] text-[18px] leading-[33px] font-bold text-black">
                WIKI
              </a>
            </div>

            <div className="mt-[26px] h-[72px] rounded-md border border-[#fede5b] bg-[#4e4e4e] px-3 pt-[9px] text-[19px] leading-[26px] text-white">
              <p>
                Keep in mind that using fast update periods and rendering multiple graphs at the same time is resource heavy and will burn
                your battery quicker if you use a laptop.
              </p>
              <p>We recommend to only render graphs for sensors you are interested in while using reasonable update periods.</p>
            </div>

            <div className="mt-[17px] flex h-[62px] items-center gap-[31px] rounded-lg border border-[#4a4c4b] pl-[17px] text-[21px] text-white">
              {TOGGLES.map((t) => (
                <label key={t.name} className="flex items-center gap-[10px] leading-7">
                  <input type="checkbox" defaultChecked={t.checked} disabled={t.disabled} className="size-[22px]" />
                  <span className="pb-0.5">{t.name}</span>
                </label>
              ))}
            </div>

            <div className="mt-[17px] flex flex-col gap-[18px]">
              <SensorPanel
                title="Gyroscope - deg/s"
                start={420}
                end={719}
                ticks={[2000, 1000, 0, -1000, -2000]}
                series={[{ color: BLUE, points: gyroX }, { color: GREEN, points: gyroY }, { color: RED, points: gyroZ }]}
                refresh="50 ms"
                scale="2000"
                values={[{ name: "X", text: "-62.68" }, { name: "Y", text: "0.49" }, { name: "Z", text: "18.78" }]}
              />
              <SensorPanel
                title="Accelerometer - g"
                start={420}
                end={719}
                ticks={[2, 1, 0, -1, -2]}
                series={[{ color: BLUE, points: accX }, { color: GREEN, points: accY }, { color: RED, points: accZ }]}
                refresh="50 ms"
                scale="2"
                values={[{ name: "X", text: "0.02 (6)" }, { name: "Y", text: "0.01 (14)" }, { name: "Z", text: "0.27" }]}
              />
              <SensorPanel
                title="Magnetometer"
                start={420}
                end={719}
                ticks={[100, 50, 0, -50, -100]}
                series={[{ color: BLUE, points: magX }, { color: RED, points: magZ }, { color: GREEN, points: magY }]}
                refresh="50 ms"
                scale="100"
                values={[{ name: "X", text: "154" }, { name: "Y", text: "-651" }, { name: "Z", text: "267" }]}
              />
              <SensorPanel
                title="Altitude - meters"
                start={414}
                end={713}
                ticks={[1, 0.5, 0, -0.5, -1]}
                series={[{ color: BLUE, points: altX }]}
                refresh="20 ms"
                values={[{ name: "X", text: "0.73" }]}
                help
              />
            </div>
          </main>
        </div>
      </div>
      <span className="absolute right-4 bottom-2 font-['Liberation_Sans',Arial,sans-serif] text-[13px] leading-4 text-[#b5b5b5]">CSDN @lida2003</span>
    </div>
  );
}
